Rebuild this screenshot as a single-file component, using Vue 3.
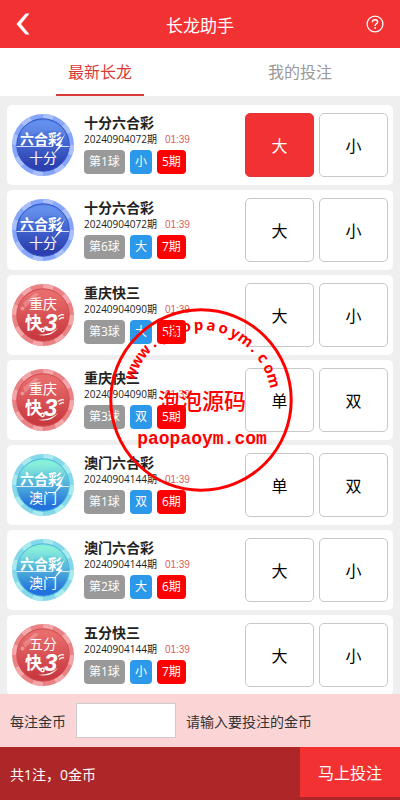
<script setup>
import { ref } from 'vue'

const tab = ref(0)
const tabs = ['最新长龙', '我的投注']
const amount = ref('')
const picked = ref('0-0')

const themes = {
  blue: { top: '#5787ec', bottom: '#2c3fae', ring: '#86a6fb', ringAlt: '#a9c0fd', edge: '#2f4fc0' },
  red: { top: '#e86c6c', bottom: '#c93a40', ring: '#ea8184', ringAlt: '#f4a6a8', edge: '#cf4a50' },
  cyan: { top: '#7eeed8', bottom: '#2271dc', ring: '#84d8ea', ringAlt: '#a8eaee', edge: '#4ab6dc' }
}

const rows = [
  { name: '十分六合彩', badge: '十分', kind: 'six', theme: 'blue', issue: '20240904072', ball: 1, result: '小', run: 5, options: ['大', '小'] },
  { name: '十分六合彩', badge: '十分', kind: 'six', theme: 'blue', issue: '20240904072', ball: 6, result: '大', run: 7, options: ['大', '小'] },
  { name: '重庆快三', badge: '重庆', kind: 'fast', theme: 'red', issue: '20240904090', ball: 3, result: '大', run: 5, options: ['大', '小'] },
  { name: '重庆快三', badge: '重庆', kind: 'fast', theme: 'red', issue: '20240904090', ball: 3, result: '双', run: 5, options: ['单', '双'] },
  { name: '澳门六合彩', badge: '澳门', kind: 'six', theme: 'cyan', issue: '20240904144', ball: 1, result: '双', run: 6, options: ['单', '双'] },
  { name: '澳门六合彩', badge: '澳门', kind: 'six', theme: 'cyan', issue: '20240904144', ball: 2, result: '大', run: 6, options: ['大', '小'] },
  { name: '五分快三', badge: '五分', kind: 'fast', theme: 'red', issue: '20240904144', ball: 1, result: '小', run: 7, options: ['大', '小'] }
]

// Letters of the stamp run clockwise along its upper arc.
const arcLetters = [...'www.paopaoym.com'].map((ch, i, all) => ({
  ch,
  angle: -69 + (i * 144) / (all.length - 1)
}))
</script>

<template>
  <div class="page">
    <header class="bar">
      <button class="icon-btn back" type="button" aria-label="返回">
        <svg width="14" height="22" viewBox="0 0 14 22"><path d="M9.5 0.5H13.5L5 11L13.5 21.5H9.5L0.5 11Z" fill="#fff" /></svg>
      </button>
      <h1>长龙助手</h1>
      <button class="icon-btn help" type="button" aria-label="帮助">
        <svg width="18" height="18" viewBox="0 0 18 18" fill="none" stroke="#fff">
          <circle cx="9" cy="9" r="7.9" stroke-width="1.3" />
          <path d="M6.4 7.3C6.4 5.7 7.5 4.8 9 4.8S11.6 5.7 11.6 7C11.6 8.7 9.1 8.9 9.1 10.9" stroke-width="1.4" />
          <circle cx="9.1" cy="13" r="0.9" fill="#fff" stroke="none" />
        </svg>
      </button>
    </header>

    <nav class="tabs">
      <button v-for="(t, i) in tabs" :key="t" type="button" class="tab" :class="{ active: tab === i }" @click="tab = i">
        <span>{{ t }}</span>
      </button>
    </nav>

    <main class="list">
      <article v-for="(r, i) in rows" :key="i" class="card">
        <svg class="logo" viewBox="0 0 62 62" aria-hidden="true">
          <defs>
            <linearGradient :id="'fill' + i" x1="0" y1="0" x2="0" y2="1">
              <stop offset="0.1" :stop-color="themes[r.theme].top" />
              <stop offset="0.9" :stop-color="themes[r.theme].bottom" />
            </linearGradient>
          </defs>
          <circle cx="31" cy="31" r="31" :fill="themes[r.theme].ring" />
          <circle cx="31" cy="31" r="28.65" fill="none" :stroke="themes[r.theme].ringAlt" stroke-width="4.7" stroke-dasharray="10 12.5" />
          <circle cx="31" cy="31" r="26.2" :fill="`url(#fill${i})`" :stroke="themes[r.theme].edge" stroke-width="1" />
          <g v-if="r.kind === 'six'">
            <path d="M9 17Q19 4 37 7Q51 11 55 22Q34 9 9 28Z" fill="#fff" opacity="0.08" />
            <text class="six" x="8" y="30">六合彩</text>
            <path d="M4.5 32.5H41M48 32.5H57" stroke="#fff" stroke-width="1" opacity="0.8" />
            <path d="M53 20L44 32H47L40 42L51 30.5H48Z" fill="#fff" />
            <text class="place" x="31" y="49">{{ r.badge }}</text>
          </g>
          <g v-else>
            <path d="M11 19L23 9L27 10L13 24Z" fill="#fff" opacity="0.22" />
            <circle cx="10.5" cy="24.5" r="2" fill="#fff" opacity="0.35" />
            <text class="place" x="31" y="25">{{ r.badge }}</text>
            <text class="fast" x="13" y="45">快</text>
            <text class="three" x="32" y="47">3</text>
            <path d="M25 50.5Q37 52 46 44Q39 54 25 50.5Z" fill="#fff" />
            <circle cx="30.5" cy="46" r="2.4" fill="#fff" />
            <circle cx="30.5" cy="46" r="0.9" :fill="themes[r.theme].bottom" />
            <path d="M46 32.5Q49 30 52 31M47 35.5Q50 33 52 34" fill="none" stroke="#fff" stroke-width="1.2" />
          </g>
        </svg>

        <div class="info">
          <h2>{{ r.name }}</h2>
          <p class="issue">{{ r.issue }}期<time>01:39</time></p>
          <div class="tags">
            <span class="tag ball">第{{ r.ball }}球</span>
            <span class="tag result">{{ r.result }}</span>
            <span class="tag run">{{ r.run }}期</span>
          </div>
        </div>

        <div class="options">
          <button
            v-for="(o, j) in r.options"
            :key="o"
            type="button"
            class="option"
            :class="{ on: picked === `${i}-${j}` }"
            @click="picked = `${i}-${j}`"
          >{{ o }}</button>
        </div>
      </article>
    </main>

    <footer>
      <div class="stake">
        <label for="stake">每注金币</label>
        <input id="stake" v-model="amount" type="text" inputmode="numeric" />
        <span>请输入要投注的金币</span>
      </div>
      <div class="submit">
        <span>共1注，0金币</span>
        <button type="button">马上投注</button>
      </div>
    </footer>

    <svg class="stamp" viewBox="0 0 184 184" aria-hidden="true">
      <circle cx="92" cy="92" r="90.2" fill="none" stroke="#f00" stroke-width="3" />
      <text
        v-for="(l, i) in arcLetters"
        :key="i"
        class="arc"
        x="92"
        y="22"
        :transform="`rotate(${l.angle} 92 92)`"
      >{{ l.ch }}</text>
      <text class="brand" x="93" y="101">泡泡源码</text>
      <text class="site" x="93" y="136">paopaoym.com</text>
    </svg>
  </div>
</template>

<style>
body {
  margin: 0;
  background: #efefef;
}
</style>

<style scoped>
.page {
  position: relative;
  display: flex;
  flex-direction: column;
  height: 100vh;
  background: #efefef;
  color: #222;
  font-family: "Open Sans", "Noto Sans CJK SC", sans-serif;
}
button {
  font-family: inherit;
  border: 0;
  padding: 0;
  cursor: pointer;
}
h1, h2, p {
  margin: 0;
}
.bar {
  display: flex;
  flex: none;
  align-items: center;
  justify-content: space-between;
  height: 48px;
  padding: 0 16px;
  background: #f23132;
  color: #fff;
}
.bar h1 {
  font-size: 17px;
  font-weight: 400;
}
.icon-btn {
  display: flex;
  width: 18px;
  background: none;
}
.tabs {
  display: flex;
  flex: none;
  height: 48px;
  background: #fff;
}
.tab {
  display: flex;
  flex: 1;
  justify-content: center;
  background: none;
  color: #999;
  font-size: 16px;
}
.tab span {
  box-sizing: border-box;
  width: 44%;
  height: 48px;
  line-height: 48px;
  border-bottom: 2px solid transparent;
}
.tab.active span {
  color: #d93a38;
  border-color: #d93a38;
}
.list {
  display: flex;
  flex: 1;
  flex-direction: column;
  gap: 5px;
  min-height: 0;
  padding: 9px 7px 0;
  overflow-y: auto;
  scrollbar-width: none;
}
.card {
  display: flex;
  flex: none;
  align-items: center;
  box-sizing: border-box;
  padding: 8px 5px;
  border-radius: 5px;
  background: #fff;
}
.logo {
  flex: none;
  width: 62px;
  height: 62px;
  margin-right: 10px;
  fill: #fff;
  font-family: "Noto Sans CJK SC", sans-serif;
}
.six {
  font-size: 14px;
  font-weight: 700;
}
.place {
  font-size: 14px;
  font-weight: 400;
  text-anchor: middle;
}
.fast {
  font-size: 17px;
  font-weight: 700;
}
.three {
  font-family: "Liberation Sans", sans-serif;
  font-size: 24px;
  font-weight: 700;
  font-style: italic;
}
.info {
  flex: 1;
  min-width: 0;
  padding-bottom: 2px;
}
.info h2 {
  font-size: 14px;
  line-height: 18px;
}
.issue {
  font-size: 10px;
  line-height: 14px;
  white-space: nowrap;
}
.issue time {
  margin-left: 8px;
  color: #d96060;
  font-family: "Liberation Sans", sans-serif;
}
.tags {
  display: flex;
  gap: 5px;
  margin-top: 3px;
}
.tag {
  padding: 0 5px;
  border-radius: 4px;
  color: #fff;
  font-size: 12px;
  line-height: 24px;
  white-space: nowrap;
}
.ball {
  background: #999;
}
.result {
  background: #2b98e9;
}
.run {
  background: #f00;
}
.options {
  display: flex;
  flex: none;
  gap: 5px;
  width: 38%;
  max-width: 240px;
}
.option {
  flex: 1;
  height: 64px;
  border: 1px solid #c8c8c8;
  border-radius: 5px;
  background: #fff;
  color: #000;
  font-size: 16px;
}
.option.on {
  border-color: #e23436;
  background: #f23132;
  color: #fff;
}
footer {
  flex: none;
  font-size: 14px;
}
.stake {
  display: flex;
  align-items: center;
  gap: 10px;
  height: 53px;
  padding: 0 10px;
  background: #fbd5d5;
  color: #333;
}
.stake input {
  box-sizing: border-box;
  width: 100px;
  height: 35px;
  padding: 0 8px;
  border: 1px solid #ccc;
  background: #fff;
  font: inherit;
}
.submit {
  display: flex;
  align-items: center;
  justify-content: space-between;
  height: 53px;
  padding-left: 10px;
  background: #ad2729;
  color: #fff;
}
.submit button {
  align-self: flex-start;
  width: 100px;
  height: 50px;
  background: #f23132;
  color: #fff;
  font-size: 16px;
}
.stamp {
  position: absolute;
  top: 308px;
  left: calc(50% - 91px);
  width: 184px;
  height: 184px;
  fill: #f00;
  text-anchor: middle;
  pointer-events: none;
}
.arc {
  font-family: "Noto Sans", sans-serif;
  font-size: 15px;
  font-weight: 700;
}
.brand {
  font-family: "Noto Sans CJK SC", sans-serif;
  font-size: 22px;
  font-weight: 500;
}
.site {
  font-family: "Liberation Mono", monospace;
  font-size: 18px;
  font-weight: 700;
}
</style>
